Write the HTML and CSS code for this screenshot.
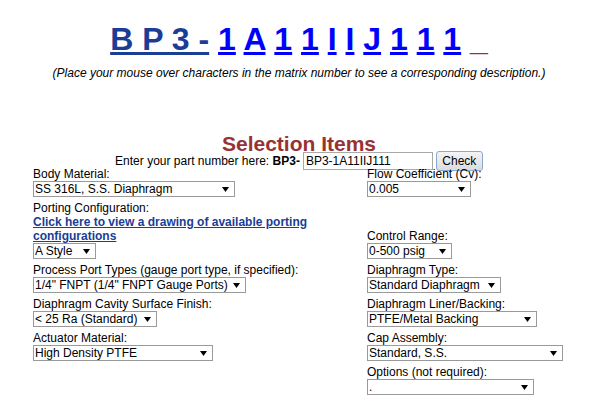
FILE: index.html
```html
<!DOCTYPE html>
<html>
<head>
<meta charset="utf-8">
<title>BP3 Part Number Configurator</title>
<link rel="stylesheet" href="styles.css">
</head>
<body>
<div class="page">
  <div class="matrix">
    <a class="mx base" href="#">B P 3 -</a>
    <a class="mx" href="#">1</a>
    <a class="mx" href="#">A</a>
    <a class="mx" href="#">1</a>
    <a class="mx" href="#">1</a>
    <a class="mx" href="#">I</a>
    <a class="mx" href="#">I</a>
    <a class="mx" href="#">J</a>
    <a class="mx" href="#">1</a>
    <a class="mx" href="#">1</a>
    <a class="mx" href="#">1</a>
    <span class="mx cursor">_</span>
  </div>
  <p class="hint">(Place your mouse over characters in the matrix number to see a corresponding description.)</p>

  <h2 class="sel-title">Selection Items</h2>
  <form class="enter">
    <span class="enter-label">Enter your part number here: <b>BP3-</b></span>
    <input class="part" type="text" value="BP3-1A11IIJ111">
    <button class="check" type="button">Check</button>
  </form>

  <div class="grid">
    <div class="cell">
      <div class="lbl">Body Material:</div>
      <div class="sel w-body"><span>SS 316L, S.S. Diaphragm</span><svg class="arr" width="7" height="5" viewBox="0 0 7 5"><polygon points="0,0 7,0 3.5,5"/></svg></div>
    </div>
    <div class="cell">
      <div class="lbl">Flow Coefficient (Cv):</div>
      <div class="sel w-flow"><span>0.005</span><svg class="arr" width="7" height="5" viewBox="0 0 7 5"><polygon points="0,0 7,0 3.5,5"/></svg></div>
    </div>

    <div class="cell">
      <div class="lbl">Porting Configuration:</div>
      <a class="porting" href="#">Click here to view a drawing of available porting configurations</a>
      <div class="sel w-style"><span>A Style</span><svg class="arr" width="7" height="5" viewBox="0 0 7 5"><polygon points="0,0 7,0 3.5,5"/></svg></div>
    </div>
    <div class="cell">
      <div class="lbl">Control Range:</div>
      <div class="sel w-range"><span>0-500 psig</span><svg class="arr" width="7" height="5" viewBox="0 0 7 5"><polygon points="0,0 7,0 3.5,5"/></svg></div>
    </div>

    <div class="cell">
      <div class="lbl">Process Port Types (gauge port type, if specified):</div>
      <div class="sel w-port"><span>1/4" FNPT (1/4" FNPT Gauge Ports)</span><svg class="arr" width="7" height="5" viewBox="0 0 7 5"><polygon points="0,0 7,0 3.5,5"/></svg></div>
    </div>
    <div class="cell">
      <div class="lbl">Diaphragm Type:</div>
      <div class="sel w-dtype"><span>Standard Diaphragm</span><svg class="arr" width="7" height="5" viewBox="0 0 7 5"><polygon points="0,0 7,0 3.5,5"/></svg></div>
    </div>

    <div class="cell">
      <div class="lbl">Diaphragm Cavity Surface Finish:</div>
      <div class="sel w-finish"><span>&lt; 25 Ra (Standard)</span><svg class="arr" width="7" height="5" viewBox="0 0 7 5"><polygon points="0,0 7,0 3.5,5"/></svg></div>
    </div>
    <div class="cell">
      <div class="lbl">Diaphragm Liner/Backing:</div>
      <div class="sel w-liner"><span>PTFE/Metal Backing</span><svg class="arr" width="7" height="5" viewBox="0 0 7 5"><polygon points="0,0 7,0 3.5,5"/></svg></div>
    </div>

    <div class="cell">
      <div class="lbl">Actuator Material:</div>
      <div class="sel w-act"><span>High Density PTFE</span><svg class="arr" width="7" height="5" viewBox="0 0 7 5"><polygon points="0,0 7,0 3.5,5"/></svg></div>
    </div>
    <div class="cell">
      <div class="lbl">Cap Assembly:</div>
      <div class="sel w-cap"><span>Standard, S.S.</span><svg class="arr" width="7" height="5" viewBox="0 0 7 5"><polygon points="0,0 7,0 3.5,5"/></svg></div>
    </div>

    <div class="cell"></div>
    <div class="cell">
      <div class="lbl">Options (not required):</div>
      <div class="sel w-opt"><span>.</span><svg class="arr" width="7" height="5" viewBox="0 0 7 5"><polygon points="0,0 7,0 3.5,5"/></svg></div>
    </div>
  </div>
</div>
</body>
</html>
```

FILE: styles.css
```css
html, body {
  margin: 0;
  padding: 0;
  background: #ffffff;
}

body {
  font-family: "Liberation Sans", Arial, sans-serif;
  font-size: 12px;
  color: #000000;
}

.page {
  width: 598px;
}

/* ---- matrix number ---- */
.matrix {
  margin: 21px 0 0;
  text-align: center;
  font-size: 32px;
  font-weight: bold;
  line-height: 36px;
  white-space: nowrap;
}

.mx {
  color: #0000ff;
  text-decoration: underline;
}

.mx.base {
  color: #1a3d96;
}

.mx.cursor {
  color: #993333;
  text-decoration: none;
}

.hint {
  margin: 9px 0 0;
  text-align: center;
  font-style: italic;
  font-size: 12px;
  line-height: 14px;
}

/* ---- selection header ---- */
.sel-title {
  margin: 55px 0 0;
  text-align: center;
  font-size: 21px;
  font-weight: bold;
  line-height: 17px;
  color: #993333;
}

.enter {
  margin: -1px 0 0;
  height: 19px;
  display: flex;
  justify-content: center;
  align-items: center;
  gap: 3px;
  font-size: 12px;
}

.enter-label {
  white-space: nowrap;
}

.part {
  box-sizing: border-box;
  width: 130px;
  height: 18px;
  margin: 0;
  padding: 0 2px;
  border: 1px solid #a9a9a9;
  font-family: "Liberation Sans", Arial, sans-serif;
  font-size: 12px;
  color: #000;
  background: #fff;
}

.check {
  box-sizing: border-box;
  width: 47px;
  height: 20px;
  margin: 0;
  padding: 0;
  border: 1px solid #8aa9d2;
  border-radius: 3px;
  background: linear-gradient(#f4f4f4, #dcdcdc);
  font-family: "Liberation Sans", Arial, sans-serif;
  font-size: 12px;
  color: #000;
}

/* ---- selection grid ---- */
.grid {
  width: 532px;
  margin: -3px auto 0;
  display: grid;
  grid-template-columns: 334px 1fr;
  align-items: end;
}

.cell {
  padding-bottom: 4px;
  line-height: 14px;
}

.lbl {
  height: 14px;
  white-space: nowrap;
}

.porting {
  display: block;
  color: #1a3d96;
  font-weight: bold;
  text-decoration: underline;
}

.sel {
  box-sizing: border-box;
  height: 16px;
  border: 1px solid #9a9a9a;
  background: #fff;
  display: flex;
  align-items: center;
  justify-content: space-between;
  padding: 0 5px 0 1px;
  white-space: nowrap;
}

.sel span {
  line-height: 14px;
}

.arr {
  display: block;
  fill: #000;
  flex: none;
}

.w-body   { width: 202px; }
.w-flow   { width: 104px; }
.w-style  { width: 63px; }
.w-range  { width: 85px; }
.w-port   { width: 213px; }
.w-dtype  { width: 134px; }
.w-finish { width: 124px; }
.w-liner  { width: 170px; }
.w-act    { width: 180px; }
.w-cap    { width: 196px; }
.w-opt    { width: 167px; }
```
